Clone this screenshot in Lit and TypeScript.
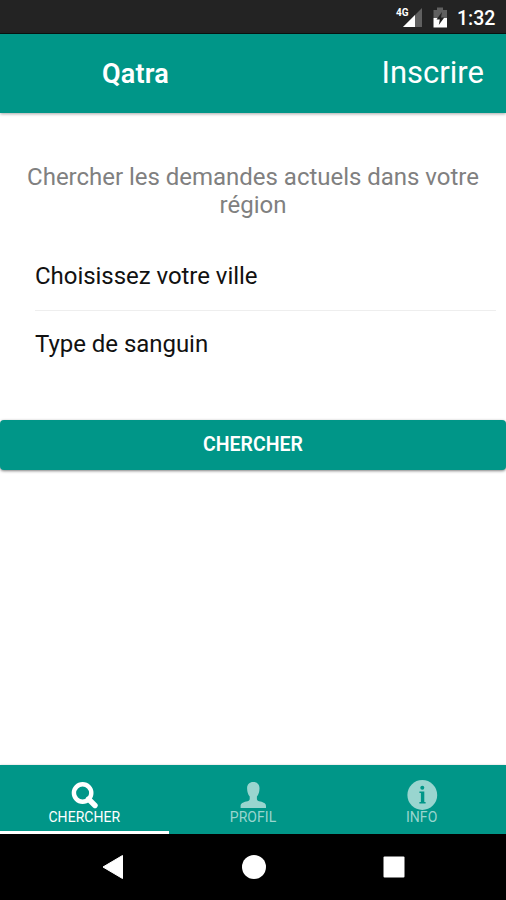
import { LitElement, html, css, svg } from "lit";
import { customElement, state } from "lit/decorators.js";
import { classMap } from "lit/directives/class-map.js";

const searchIcon = svg`
  <circle cx="13.6" cy="13" r="8.700" fill="none" stroke="currentColor" stroke-width="4.400"/>
  <path d="M19.5 19L26 25.500" stroke="currentColor" stroke-width="5.400" stroke-linecap="round"/>`;

const personIcon = svg`
  <path fill="currentColor" d="M15.300 2c4 0 6.400 2.700 6.200 6.600-.1 3.500-.9 6-2.600 8v2.400c0 1.500 1.400 2 3.500 2.600 3.300 1 5.600 1.700 5.600 4.700v1.700H2.600v-1.700c0-3 2.300-3.700 5.600-4.700 2.100-.6 3.500-1.100 3.500-2.600v-2.400c-1.700-2-2.500-4.500-2.600-8C8.900 4.700 11.300 2 15.300 2z"/>`;

const infoIcon = svg`
  <circle cx="15.300" cy="15" r="14.900" fill="currentColor"/>
  <g fill="#009688">
    <circle cx="15.300" cy="7.700" r="2"/>
    <path d="M12.400 11.500h4.900v10.500h1.300v1.400h-6.200v-1.400h1.500v-9.100h-1.500z"/>
  </g>`;

const tabs = [
  { id: "search", label: "CHERCHER", icon: searchIcon },
  { id: "profile", label: "PROFIL", icon: personIcon },
  { id: "info", label: "INFO", icon: infoIcon },
];

@customElement("app-root")
export class AppRoot extends LitElement {
  @state() private active = "search";

  static styles = css`
    :host {
      display: flex;
      flex-direction: column;
      width: 100%;
      height: 900px;
      overflow: hidden;
      background: #fff;
      font-family: Roboto, "Liberation Sans", sans-serif;
    }
    svg { display: block; overflow: visible; }
    button { border: 0; margin: 0; padding: 0; font: inherit; color: inherit; background: none; }
    .status {
      flex: none;
      box-sizing: border-box;
      height: 34px;
      padding-right: 10px;
      display: flex;
      align-items: center;
      justify-content: flex-end;
      background: #232323;
      border-bottom: 1px solid #071512;
      color: #fff;
    }
    .network { font-size: 10px; font-weight: 700; fill: #fff; }
    .clock { width: 39px; margin-left: 9px; padding-top: 4px; font-size: 19.500px; font-weight: 500; line-height: 24px; white-space: nowrap; }
    .bar {
      flex: none;
      box-sizing: border-box;
      height: 79px;
      padding: 0 22px 0 102px;
      display: flex;
      align-items: center;
      justify-content: space-between;
      background: #009688;
      color: #fff;
      box-shadow: 0 1px 3px rgba(0, 0, 0, .35);
    }
    .title { font-size: 27px; font-weight: 600; line-height: 32px; letter-spacing: .2px; }
    .register { font-size: 31px; line-height: 36px; padding-bottom: 1px; }
    main { flex: 1; display: flex; flex-direction: column; }
    .intro {
      margin: 50px 20px 0;
      text-align: center;
      color: #808080;
      font-size: 24px;
      letter-spacing: -.02px;
      line-height: 28px;
    }
    .fields { margin: 24px 10px 0 35px; display: flex; flex-direction: column; }
    .field { height: 67px; line-height: 67px; font-size: 24px; letter-spacing: -.04px; color: #111; white-space: nowrap; }
    .field + .field { border-top: 1px solid #eee; }
    .submit {
      height: 50px;
      margin-top: 42px;
      padding-bottom: 2px;
      border-radius: 4px;
      background: #009688;
      color: #fff;
      font-size: 19.500px;
      font-weight: 600;
      box-shadow: 0 1px 3px rgba(0, 0, 0, .5);
    }
    .tabs { flex: none; height: 69px; display: grid; grid-template-columns: repeat(3, 1fr); background: #009688; color: #fff; box-shadow: 0 0 2px rgba(0, 0, 0, .2); }
    .tab { display: flex; flex-direction: column; align-items: center; box-sizing: border-box; padding-top: 15px; border-bottom: 3px solid transparent; color: #99d5cf; }
    .tab.active { color: #fff; border-bottom-color: #fff; }
    .tab-label { font-size: 14px; line-height: 16px; margin-top: -1px; letter-spacing: .05px; }
    .nav { flex: none; height: 66px; display: flex; align-items: center; justify-content: center; gap: 117px; background: #000; }
  `;

  render() {
    return html`
      <div class="status">
        <svg width="52" height="26" viewBox="0 0 52 26">
          <path d="M26 4v19H7z" fill="#606060"/>
          <path d="M19 11v12H7z" fill="#fff"/>
          <text class="network" x="0" y="12">4G</text>
          <path d="M37.500 6h3.500V3.500h6V6h4v8H37.500z" fill="#606060"/>
          <path d="M37.500 14h13.500v9.500H37.500z" fill="#fff"/>
          <path d="M46 8l-5.500 7.500h3.300l-1 5.500 5.500-7.500h-3.300z" fill="#232323"/>
        </svg>
        <span class="clock">1:32</span>
      </div>
      <header class="bar">
        <span class="title">Qatra</span>
        <button class="register">Inscrire</button>
      </header>
      <main>
        <div class="intro">Chercher les demandes actuels dans votre région</div>
        <div class="fields">
          <div class="field">Choisissez votre ville</div>
          <div class="field">Type de sanguin</div>
        </div>
        <button class="submit">CHERCHER</button>
      </main>
      <div class="tabs">
        ${tabs.map(
          (t) => html`
            <button class=${classMap({ tab: true, active: this.active === t.id })} @click=${() => (this.active = t.id)}>
              <svg width="30" height="30" viewBox="0 0 30 30">${t.icon}</svg>
              <span class="tab-label">${t.label}</span>
            </button>
          `
        )}
      </div>
      <div class="nav">
        <svg width="24" height="26" viewBox="0 0 24 26"><path d="M21.500 1.500v23L2 13z" fill="#fff" stroke="#fff" stroke-linejoin="round"/></svg>
        <svg width="24" height="24" viewBox="0 0 24 24"><circle cx="12" cy="12" r="12" fill="#fff"/></svg>
        <svg width="22" height="22" viewBox="0 0 22 22"><rect width="21" height="21" x=".5" y=".5" rx="1" fill="#fff"/></svg>
      </div>
    `;
  }
}
